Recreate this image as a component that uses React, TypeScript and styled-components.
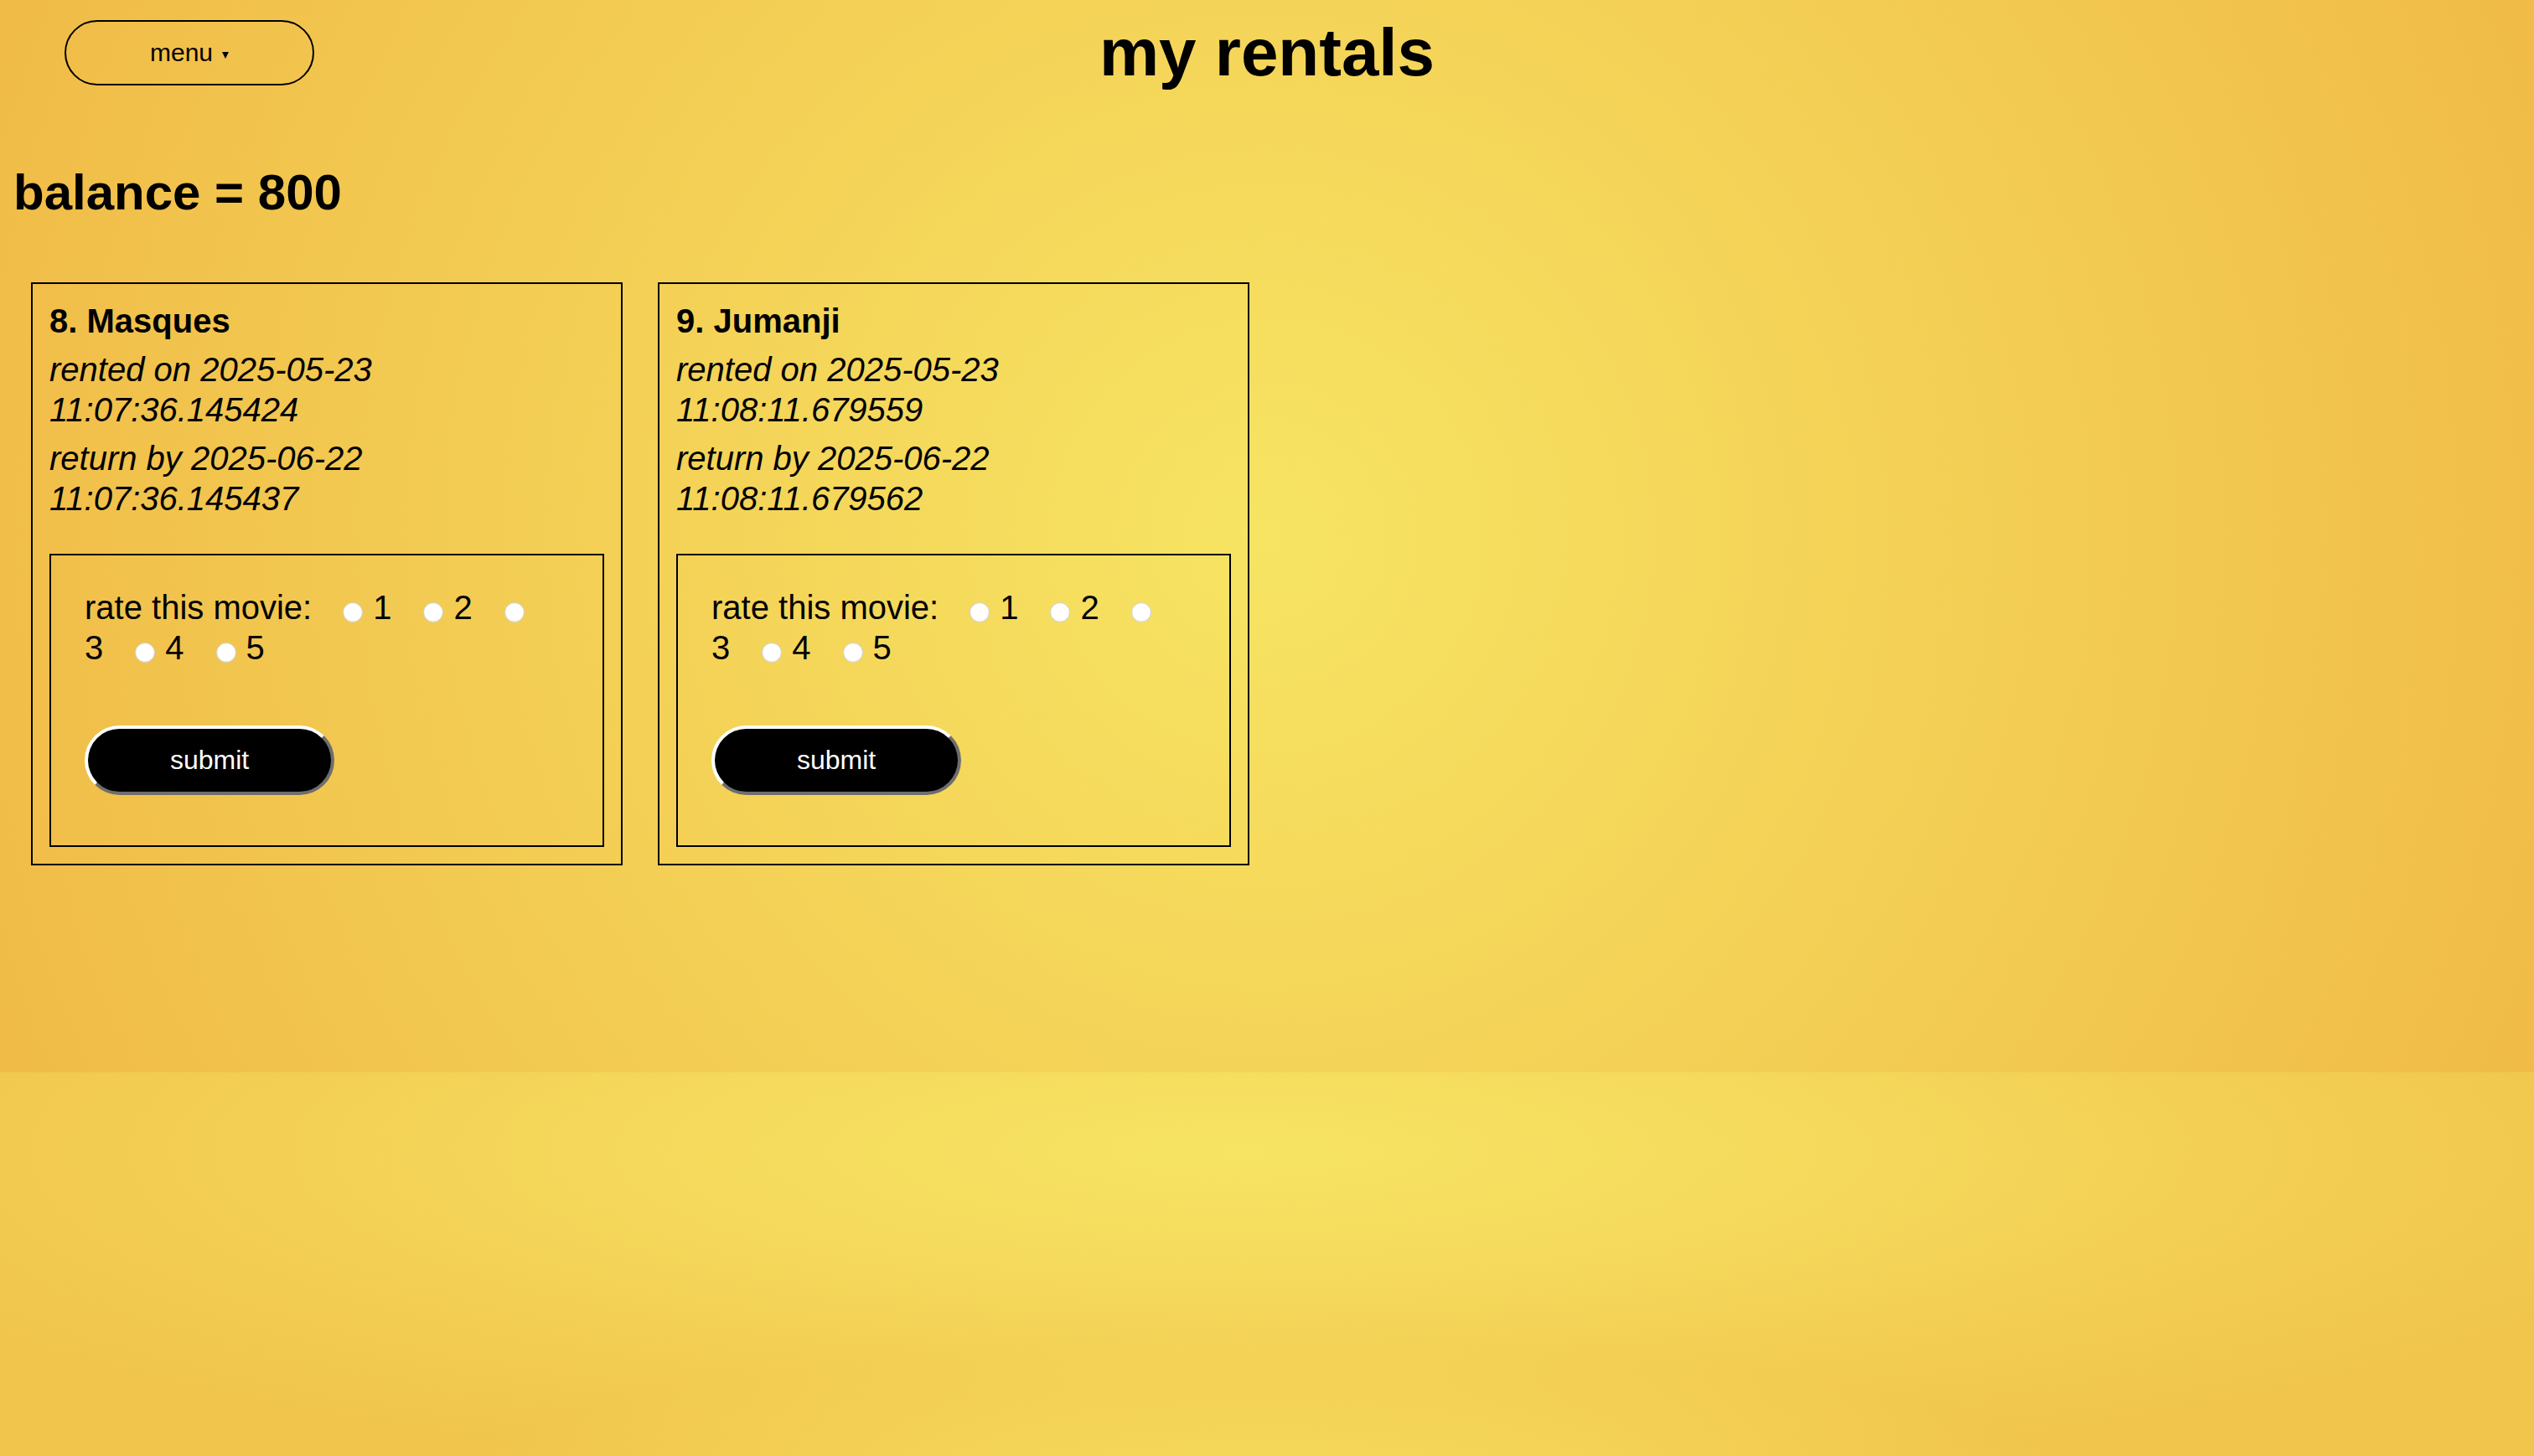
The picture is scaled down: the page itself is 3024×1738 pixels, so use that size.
import React from "react";
import styled, { createGlobalStyle } from "styled-components";

const GlobalStyle = createGlobalStyle`
  html {
    min-height: 100%;
    background:
      radial-gradient(ellipse 1000px 200px at 50% 520px, rgba(247, 226, 98, 0.85), rgba(247, 226, 98, 0)) 0 1280px / 100% 458px no-repeat,
      radial-gradient(ellipse 1800px 400px at 49% 94px, #f7e463 0%, #f5d95c 40%, #f2cc51 75%, #f1c54c 100%) 0 1280px / 100% 458px no-repeat,
      radial-gradient(circle farthest-corner at 50% 50%, #f7e463 0%, #f0bb47 100%) 0 0 / 100% 1280px no-repeat,
      #f2c850;
  }
  body {
    margin: 16px;
    font-family: "Liberation Sans", Arial, Helvetica, sans-serif;
    color: #000;
  }
`;

const Header = styled.header`
  display: grid;
  grid-template-columns: 1fr auto 1fr;
  align-items: center;
  padding-top: 1px;
`;

const MenuButton = styled.button`
  justify-self: start;
  margin-left: 61px;
  box-sizing: border-box;
  width: 298px;
  height: 78px;
  border: 2px solid #000;
  border-radius: 39px;
  background: transparent;
  color: #000;
  font-family: "Liberation Sans", Arial, Helvetica, sans-serif;
  font-size: 30px;
  padding: 0;
  display: flex;
  align-items: center;
  justify-content: center;
  cursor: pointer;
`;

const Caret = styled.svg`
  width: 8px;
  height: 8px;
  margin-left: 11px;
  margin-top: 6px;
`;

const Title = styled.h1`
  margin: 0;
  font-size: 80px;
  line-height: 92px;
  font-weight: 700;
  text-align: center;
`;

const Balance = styled.h2`
  margin: 86px 0 0;
  font-size: 60px;
  line-height: 69px;
  font-weight: 700;
`;

const CardList = styled.div`
  display: flex;
  align-items: flex-start;
  margin-top: 53px;
`;

const Card = styled.section`
  width: 662px;
  margin: 20px 21px;
  padding: 20px;
  border: 2px solid #000;
`;

const CardTitle = styled.h3`
  margin: 0;
  font-size: 40px;
  line-height: 48px;
  font-weight: 700;
`;

const Meta = styled.p`
  margin: 10px 0 0;
  font-size: 40px;
  line-height: 48px;
  font-style: italic;
`;

const RateForm = styled.form`
  margin-top: 42px;
  border: 2px solid #000;
  padding: 38px 40px 60px;
`;

const RateLine = styled.div`
  font-size: 40px;
  line-height: 48px;
`;

const Prompt = styled.span`
  padding-right: 37px;
`;

const Radio = styled.input`
  appearance: none;
  -webkit-appearance: none;
  box-sizing: border-box;
  width: 24px;
  height: 24px;
  margin: 0 12px 0 0;
  border-radius: 50%;
  background: #fff;
  border: 1px solid #cfcfcf;
  box-shadow: inset 0 -1px 1px rgba(0, 0, 0, 0.06);
  vertical-align: -4px;
`;

const Num = styled.span`
  padding-right: 38px;
`;

const SubmitButton = styled.button`
  display: block;
  box-sizing: border-box;
  width: 298px;
  height: 83px;
  margin-top: 69px;
  padding: 0;
  border-width: 4px;
  border-style: solid;
  border-color: #ffffff #6e6e6e #6e6e6e #ffffff;
  border-radius: 42px;
  background: #000;
  color: #fff;
  font-family: "Liberation Sans", Arial, Helvetica, sans-serif;
  font-size: 32px;
  cursor: pointer;
`;

type Rental = {
  id: number;
  title: string;
  rented: string;
  due: string;
};

const rentals: Rental[] = [
  {
    id: 8,
    title: "Masques",
    rented: "2025-05-23 11:07:36.145424",
    due: "2025-06-22 11:07:36.145437",
  },
  {
    id: 9,
    title: "Jumanji",
    rented: "2025-05-23 11:08:11.679559",
    due: "2025-06-22 11:08:11.679562",
  },
];

const RentalCard: React.FC<{ rental: Rental }> = ({ rental }) => (
  <Card>
    <CardTitle>
      {rental.id}. {rental.title}
    </CardTitle>
    <Meta>rented on {rental.rented}</Meta>
    <Meta>return by {rental.due}</Meta>
    <RateForm onSubmit={(e) => e.preventDefault()}>
      <RateLine>
        <Prompt>rate this movie:</Prompt>
        {[1, 2, 3, 4, 5].map((n) => (
          <React.Fragment key={n}>
            <Radio type="radio" name={`rate-${rental.id}`} value={n} />
            <Num>{n}</Num>
          </React.Fragment>
        ))}
      </RateLine>
      <SubmitButton type="submit">submit</SubmitButton>
    </RateForm>
  </Card>
);

export default function App() {
  return (
    <>
      <GlobalStyle />
      <Header>
        <MenuButton type="button">
          menu
          <Caret viewBox="0 0 8 8" aria-hidden="true">
            <path d="M0 0 H8 L4 8 Z" fill="#000" />
          </Caret>
        </MenuButton>
        <Title>my rentals</Title>
        <span />
      </Header>
      <Balance>balance = 800</Balance>
      <CardList>
        {rentals.map((r) => (
          <RentalCard key={r.id} rental={r} />
        ))}
      </CardList>
    </>
  );
}
